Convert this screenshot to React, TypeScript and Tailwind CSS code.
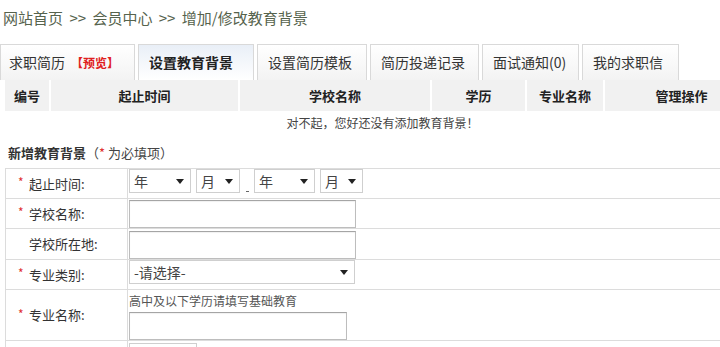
import React from "react";

const tabs = [
  { label: "求职简历", w: "w-[135px]", pl: "pl-[8px]", extra: true },
  { label: "设置教育背景", w: "w-[116px]", active: true },
  { label: "设置简历模板", w: "w-[110px]" },
  { label: "简历投递记录", w: "w-[109px]" },
  { label: "面试通知(0)", w: "w-[97px]" },
  { label: "我的求职信", w: "w-[97px]" },
];

const cols = [
  { label: "编号", w: "w-[46px]" },
  { label: "起止时间", w: "w-[189px]" },
  { label: "学校名称", w: "w-[192px]" },
  { label: "学历", w: "w-[95px]" },
  { label: "专业名称", w: "w-[78px]" },
  { label: "管理操作", w: "w-[155px]" },
];

function Caret() {
  return (
    <svg width="8" height="5" viewBox="0 0 8 5" className="shrink-0">
      <path d="M0 0 L8 0 L4 5 Z" fill="#222" />
    </svg>
  );
}

function FakeSelect({ text, w, h = "h-[23px]" }: { text: string; w: string; h?: string }) {
  return (
    <div
      className={`${w} ${h} flex items-center justify-between border border-[#cfcfcf] bg-white pl-[4px] pr-[6px] text-[14px] leading-[20px] text-[#444]`}
    >
      <span className="whitespace-nowrap">{text}</span>
      <Caret />
    </div>
  );
}

function TextInput({ w = "w-[227px]", mt = "mt-[1px]" }: { w?: string; mt?: string }) {
  return (
    <div
      className={`${w} ${mt} h-[28px] border border-[#bdbdbd] border-t-[#a5a5a5] bg-white shadow-[inset_0_1px_1px_rgba(0,0,0,0.06)]`}
    />
  );
}

function Label({ text, required }: { text: string; required?: boolean }) {
  return (
    <div className="w-[122px] shrink-0 border-r border-[#dcdcdc] pl-[12px] flex items-center text-[13px] text-[#333]">
      <span className="inline-block w-[11px] text-[12px] text-[#e03030] -mt-[3px]">
        {required ? "*" : ""}
      </span>
      <span>{text}</span>
    </div>
  );
}

export default function App() {
  return (
    <div className="w-[720px] h-[347px] overflow-hidden bg-white text-[#333] font-['Noto_Sans_CJK_SC','Liberation_Sans',sans-serif]">
      <div className="w-[770px]">
        {/* breadcrumb */}
        <div className="h-[44px] pl-[3px] pt-[7px] text-[15px] leading-[22px] text-[#56634d] whitespace-nowrap">
          网站首页 <span className="mx-[3px]">&gt;&gt;</span> 会员中心{" "}
          <span className="mx-[3px]">&gt;&gt;</span> 增加/修改教育背景
        </div>

        {/* tabs */}
        <div className="flex gap-[3px] h-[36px]">
          {tabs.map((t) => (
            <div
              key={t.label}
              className={`${t.w} ${t.pl ?? "pl-[10px]"} h-full flex items-center border border-b-0 border-[#d9d9d9] text-[14px] whitespace-nowrap ${
                t.active
                  ? "bg-gradient-to-b from-[#e9eff7] to-white font-bold text-[#222]"
                  : "bg-gradient-to-b from-white to-[#f3f3f3] text-[#333]"
              }`}
            >
              {t.label}
              {t.extra && (
                <span className="ml-[6px] text-[12px] font-bold text-[#e02020]">【预览】</span>
              )}
            </div>
          ))}
        </div>

        {/* list header */}
        <div className="flex ml-[5px] h-[31px]">
          {cols.map((c) => (
            <div
              key={c.label}
              className={`${c.w} h-full bg-[#f1f1f1] border-r-2 border-white flex items-center justify-center text-[13px] font-bold text-[#222]`}
            >
              {c.label}
            </div>
          ))}
        </div>
        <div className="ml-[5px] w-[755px] h-[24px] flex items-center justify-center text-[12px] text-[#444]">
          对不起，您好还没有添加教育背景！
        </div>

        {/* form title */}
        <div className="h-[33px] pt-[8px] pl-[8px] text-[13px] leading-[20px] whitespace-nowrap">
          <span className="font-bold text-[#333]">新增教育背景</span>
          <span className="text-[#444]">
            （<span className="text-[#e03030]">*</span> 为必填项）
          </span>
        </div>

        {/* form */}
        <div className="ml-[5px] w-[765px] border-t border-l border-[#dcdcdc]">
          <div className="flex h-[30px] border-b border-[#dcdcdc]">
            <Label text="起止时间:" required />
            <div className="flex items-start pl-[1px] pt-0">
              <FakeSelect text="年" w="w-[62px]" h="h-[24px]" />
              <div className="w-[5px]" />
              <FakeSelect text="月" w="w-[44px]" h="h-[24px]" />
              <div className="w-[14px] h-[24px] flex items-end justify-center pb-[1px]">
                <div className="w-[3px] h-[1px] bg-[#666]" />
              </div>
              <FakeSelect text="年" w="w-[61px]" h="h-[24px]" />
              <div className="w-[5px]" />
              <FakeSelect text="月" w="w-[43px]" h="h-[24px]" />
            </div>
          </div>
          <div className="flex h-[30px] border-b border-[#dcdcdc]">
            <Label text="学校名称:" required />
            <div className="pl-[1px]">
              <TextInput />
            </div>
          </div>
          <div className="flex h-[31px] border-b border-[#dcdcdc]">
            <Label text="学校所在地:" />
            <div className="pl-[1px]">
              <TextInput mt="mt-[2px]" />
            </div>
          </div>
          <div className="flex h-[30px] border-b border-[#dcdcdc]">
            <Label text="专业类别:" required />
            <div className="pl-[1px]">
              <FakeSelect text="-请选择-" w="w-[226px]" h="h-[24px]" />
            </div>
          </div>
          <div className="flex h-[51px] border-b border-[#dcdcdc]">
            <Label text="专业名称:" required />
            <div className="pl-[1px]">
              <div className="h-[21px] text-[12px] leading-[21px] text-[#555]">
                高中及以下学历请填写基础教育
              </div>
              <TextInput w="w-[218px]" />
            </div>
          </div>
          <div className="flex h-[40px]">
            <Label text="" />
            <div className="pl-[1px] pt-[2px]">
              <FakeSelect text="-请选择-" w="w-[68px]" h="h-[24px]" />
            </div>
          </div>
        </div>
      </div>
    </div>
  );
}
